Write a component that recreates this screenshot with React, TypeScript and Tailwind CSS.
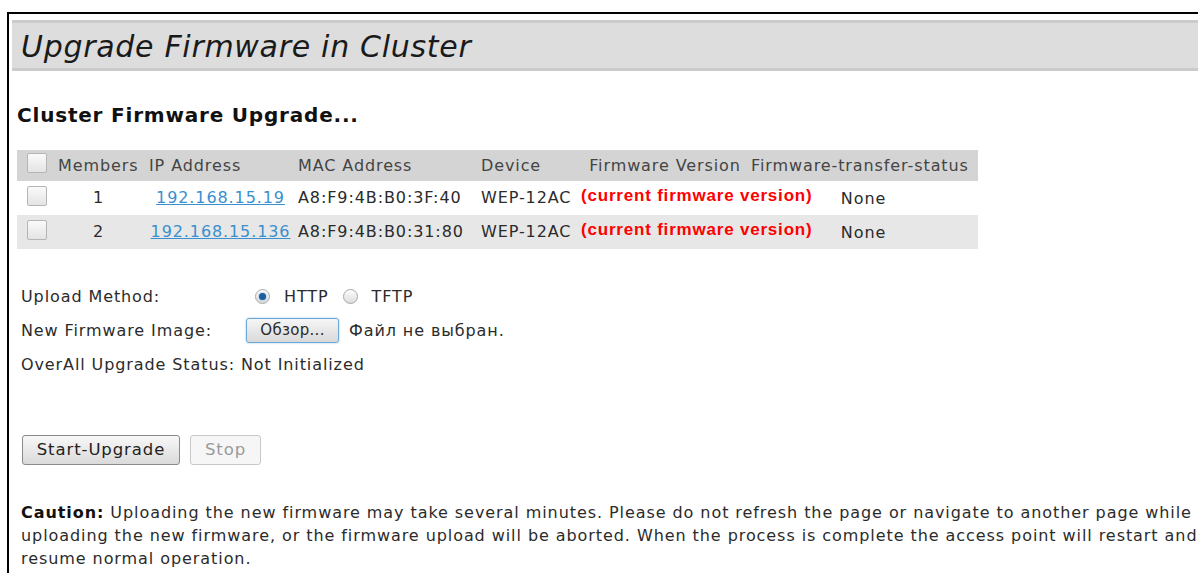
import { useState } from 'react'

type Member = { id: number; ip: string; mac: string; device: string; status: string }

const members: Member[] = [
  { id: 1, ip: '192.168.15.19', mac: 'A8:F9:4B:B0:3F:40', device: 'WEP-12AC', status: 'None' },
  { id: 2, ip: '192.168.15.136', mac: 'A8:F9:4B:B0:31:80', device: 'WEP-12AC', status: 'None' },
]

const cols = 'grid grid-cols-[38px_91px_149px_183px_103px_168px_229px]'

function Checkbox() {
  return (
    <span className="inline-block h-[20px] w-[20px] rounded-[2px] border border-[#b5b5b5] bg-gradient-to-b from-[#fafafa] to-[#e4e4e4]" />
  )
}

function Radio({ checked }: { checked: boolean }) {
  return (
    <span className="inline-flex h-[15px] w-[15px] items-center justify-center rounded-full border border-[#a8a8a8] bg-gradient-to-b from-[#fdfdfd] to-[#dcdcdc]">
      {checked && <span className="h-[7px] w-[7px] rounded-full bg-[#1d5f9c] shadow-[0_0_2px_#5aa0dc]" />}
    </span>
  )
}

export default function App() {
  const [method, setMethod] = useState<'http' | 'tftp'>('http')

  return (
    <div className="h-[573px] w-[1198px] overflow-hidden bg-white pl-[7px] pt-[12px] font-['DejaVu_Sans',sans-serif] text-[16px] tracking-[0.9px] text-[#2b2b2b]">
      <div className="h-[600px] border-l-2 border-t-2 border-black pl-[3px] pt-[6px]">
        <div className="flex h-[51px] items-center border-y-[3px] border-[#cbcbcb] bg-[#dddddd] pl-[9px] pt-[3px]">
          <h1 className="text-[30px] italic leading-none tracking-[0.7px] text-[#1a1a1a]">Upgrade Firmware in Cluster</h1>
        </div>

        <div className="pl-[5px]">
          <h2 className="mt-[34px] text-[20px] font-bold leading-none tracking-[0.8px] text-[#111]">Cluster Firmware Upgrade...</h2>

          <div className="mt-[25px] w-[961px]">
            <div className={`${cols} h-[31px] items-center bg-[#d4d4d4] text-[#444]`}>
              <span className="pl-[10px] pt-[2px]"><Checkbox /></span>
              <span className="pl-[3px]">Members</span>
              <span className="pl-[3px]">IP Address</span>
              <span className="pl-[3px]">MAC Address</span>
              <span className="pl-[3px]">Device</span>
              <span className="whitespace-nowrap text-center">Firmware Version</span>
              <span className="whitespace-nowrap pl-[2px]">Firmware-transfer-status</span>
            </div>
            {members.map((m, i) => (
              <div key={m.id} className={`${cols} h-[34px] items-center ${i % 2 ? 'bg-[#e7e7e7]' : 'bg-white'}`}>
                <span className="pl-[10px] pt-[2px]"><Checkbox /></span>
                <span className="pr-[4px] text-center">{m.id}</span>
                <a href="#" className="text-center text-[#3a8fce] underline">{m.ip}</a>
                <span className="pl-[3px]">{m.mac}</span>
                <span className="pl-[3px]">{m.device}</span>
                <span className="-mt-[5px] whitespace-nowrap font-['Liberation_Sans',sans-serif] text-[17px] font-bold tracking-[0.8px] text-[#ff0000]">
                  (current firmware version)
                </span>
                <span className="pt-[2px] text-center">{m.status}</span>
              </div>
            ))}
          </div>

          <div className="mt-[36px] flex flex-col gap-[11px] pl-[4px]">
            <div className="flex h-[23px] items-center">
              <span className="w-[234px]">Upload Method:</span>
              <label className="flex items-center gap-[14px]" onClick={() => setMethod('http')}>
                <Radio checked={method === 'http'} />
                <span>HTTP</span>
              </label>
              <label className="ml-[14px] flex items-center gap-[14px]" onClick={() => setMethod('tftp')}>
                <Radio checked={method === 'tftp'} />
                <span>TFTP</span>
              </label>
            </div>
            <div className="flex h-[23px] items-center">
              <span className="w-[225px]">New Firmware Image:</span>
              <button className="h-[25px] w-[93px] rounded-[3px] border border-[#6aa6d6] bg-gradient-to-b from-[#f6f6f6] to-[#d9d9d9] text-[15px] tracking-[0.3px] shadow-[0_0_2px_#8cc0ea]">
                Обзор...
              </button>
              <span className="ml-[10px]">Файл не выбран.</span>
            </div>
            <div className="flex h-[23px] items-center">OverAll Upgrade Status: Not Initialized</div>
          </div>

          <div className="mt-[59px] flex gap-[10px] pl-[5px] text-[16.5px]">
            <button className="h-[30px] w-[158px] rounded-[3px] border border-[#8a8a8a] bg-gradient-to-b from-[#f8f8f8] to-[#dadada] text-[#222]">
              Start-Upgrade
            </button>
            <button disabled className="h-[30px] w-[71px] rounded-[3px] border border-[#c8c8c8] bg-[#f6f6f6] text-[#9a9a9a]">
              Stop
            </button>
          </div>

          <p className="mt-[36px] w-[1190px] pl-[4px] leading-[23px] tracking-[0.93px]">
            <b className="text-[#111]">Caution:</b>{' '}
            <span>
              Uploading the new firmware may take several minutes. Please do not refresh the page or navigate to another page while
              uploading the new firmware, or the firmware upload will be aborted. When the process is complete the access point will
              restart and resume normal operation.
            </span>
          </p>
        </div>
      </div>
    </div>
  )
}
